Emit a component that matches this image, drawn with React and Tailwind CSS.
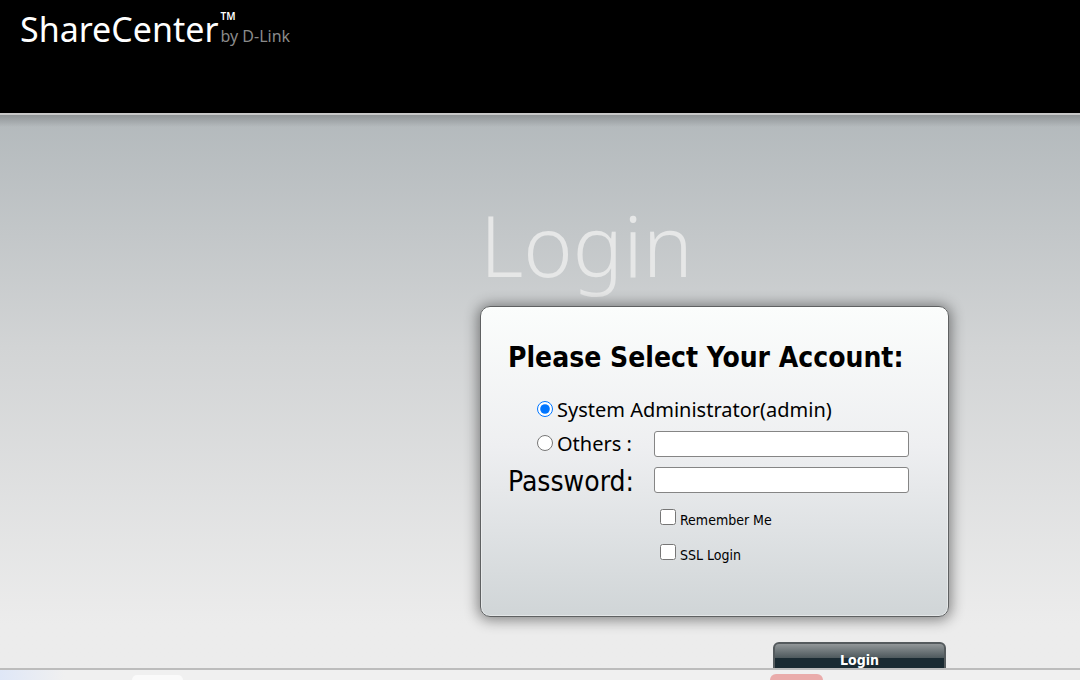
import React, { useState } from "react";

function Logo() {
  return (
    <div className="flex items-start gap-0.5 whitespace-nowrap font-['Noto_Sans','Open_Sans',sans-serif]">
      <span className="text-[34px] leading-10 text-white">ShareCenter</span>
      <div className="flex flex-col pt-px">
        <span className="text-[10px] leading-3 font-semibold text-white">TM</span>
        <span className="mt-0.5 text-base leading-6 text-[#8a8a8a]">by D-Link</span>
      </div>
    </div>
  );
}

function AccountOption({ id, label, checked, onChange }) {
  return (
    <div className="ml-7 flex h-9 items-center gap-1">
      <input
        id={id}
        type="radio"
        name="account"
        className="-mt-0.5 ml-px size-4"
        checked={checked}
        onChange={onChange}
      />
      <label
        htmlFor={id}
        className="font-['Noto_Sans',sans-serif] text-xl leading-8 whitespace-nowrap"
      >
        {label}
      </label>
    </div>
  );
}

function CheckRow({ id, label }) {
  return (
    <div className="flex items-center gap-1">
      <input id={id} type="checkbox" className="-mt-1.5 size-4" />
      <label htmlFor={id} className="text-sm leading-5">
        {label}
      </label>
    </div>
  );
}

function LoginForm() {
  const [account, setAccount] = useState("admin");
  const field =
    "w-full h-[26px] rounded-[3px] border border-[#858585] bg-white px-2 text-base";

  return (
    <form
      className="flex flex-col font-['DejaVu_Sans_Condensed','DejaVu_Sans',sans-serif] text-black"
      onSubmit={(e) => e.preventDefault()}
    >
      <div className="min-h-[311px] rounded-[10px] border border-[#5f6162] bg-linear-to-b from-[#fbfdfc] via-[#eeeff1] via-45% to-[#d0d5d7] px-[27px] pt-[33px] shadow-[0_1px_14px_2px_rgba(0,0,0,0.45),inset_0_0_0_1px_rgba(255,255,255,0.4)]">
        <h2 className="text-[28px] leading-9 font-bold whitespace-nowrap">
          Please Select Your Account:
        </h2>

        <div className="mt-4">
          <AccountOption
            id="admin"
            label="System Administrator(admin)"
            checked={account === "admin"}
            onChange={() => setAccount("admin")}
          />
        </div>

        <div className="-mt-0.5 grid grid-cols-[146px_255px] items-center">
          <AccountOption
            id="others"
            label="Others :"
            checked={account === "others"}
            onChange={() => setAccount("others")}
          />
          <input type="text" aria-label="User name" className={field} />

          <label htmlFor="password" className="pt-1 text-[28px] leading-8">
            Password:
          </label>
          <input id="password" type="password" className={field} />

          <div className="col-start-2 mt-3 ml-1.5 flex flex-col gap-[15px]">
            <CheckRow id="remember" label="Remember Me" />
            <CheckRow id="ssl" label="SSL Login" />
          </div>
        </div>
      </div>

      <button
        type="submit"
        className="mt-[25px] mr-[3px] h-9 w-[173px] self-end rounded-md border-2 border-[#555b5e] bg-linear-to-b from-[#929799] via-[#4c575b] via-45% to-[#1a2a32] to-45% text-sm font-bold text-white"
      >
        Login
      </button>
    </form>
  );
}

export default function App() {
  return (
    <div className="flex h-screen flex-col overflow-hidden bg-[#ececec]">
      <header className="h-[113px] shrink-0 bg-black px-5 pt-[9px]">
        <Logo />
      </header>

      <main className="min-h-0 flex-1 overflow-hidden border-t-2 border-[#c8c8c8] bg-linear-to-b from-[#b3b9bc] via-[#d2d4d5] via-42% to-[#ececec] to-92%">
        <div className="h-3 bg-linear-to-b from-black/20 to-transparent" />
        <div className="ml-[480px] w-[469px] pt-[65px]">
          <h1 className="pb-2 font-['Noto_Sans','Open_Sans',sans-serif] text-[84px] leading-[106px] font-light text-[#e6e7e7]">
            Login
          </h1>
          <LoginForm />
        </div>
      </main>

      <footer className="flex h-3 shrink-0 items-end border-t-2 border-[#bcbcbc] bg-linear-to-r from-[#dfe7f7] to-[#f0f0f0] to-6%">
        <div className="ml-[132px] h-[5px] w-[51px] rounded-t-md bg-[#fafafa]" />
        <div className="ml-[587px] h-[6px] w-[53px] rounded-t-md bg-[#eaacab]" />
      </footer>
    </div>
  );
}
